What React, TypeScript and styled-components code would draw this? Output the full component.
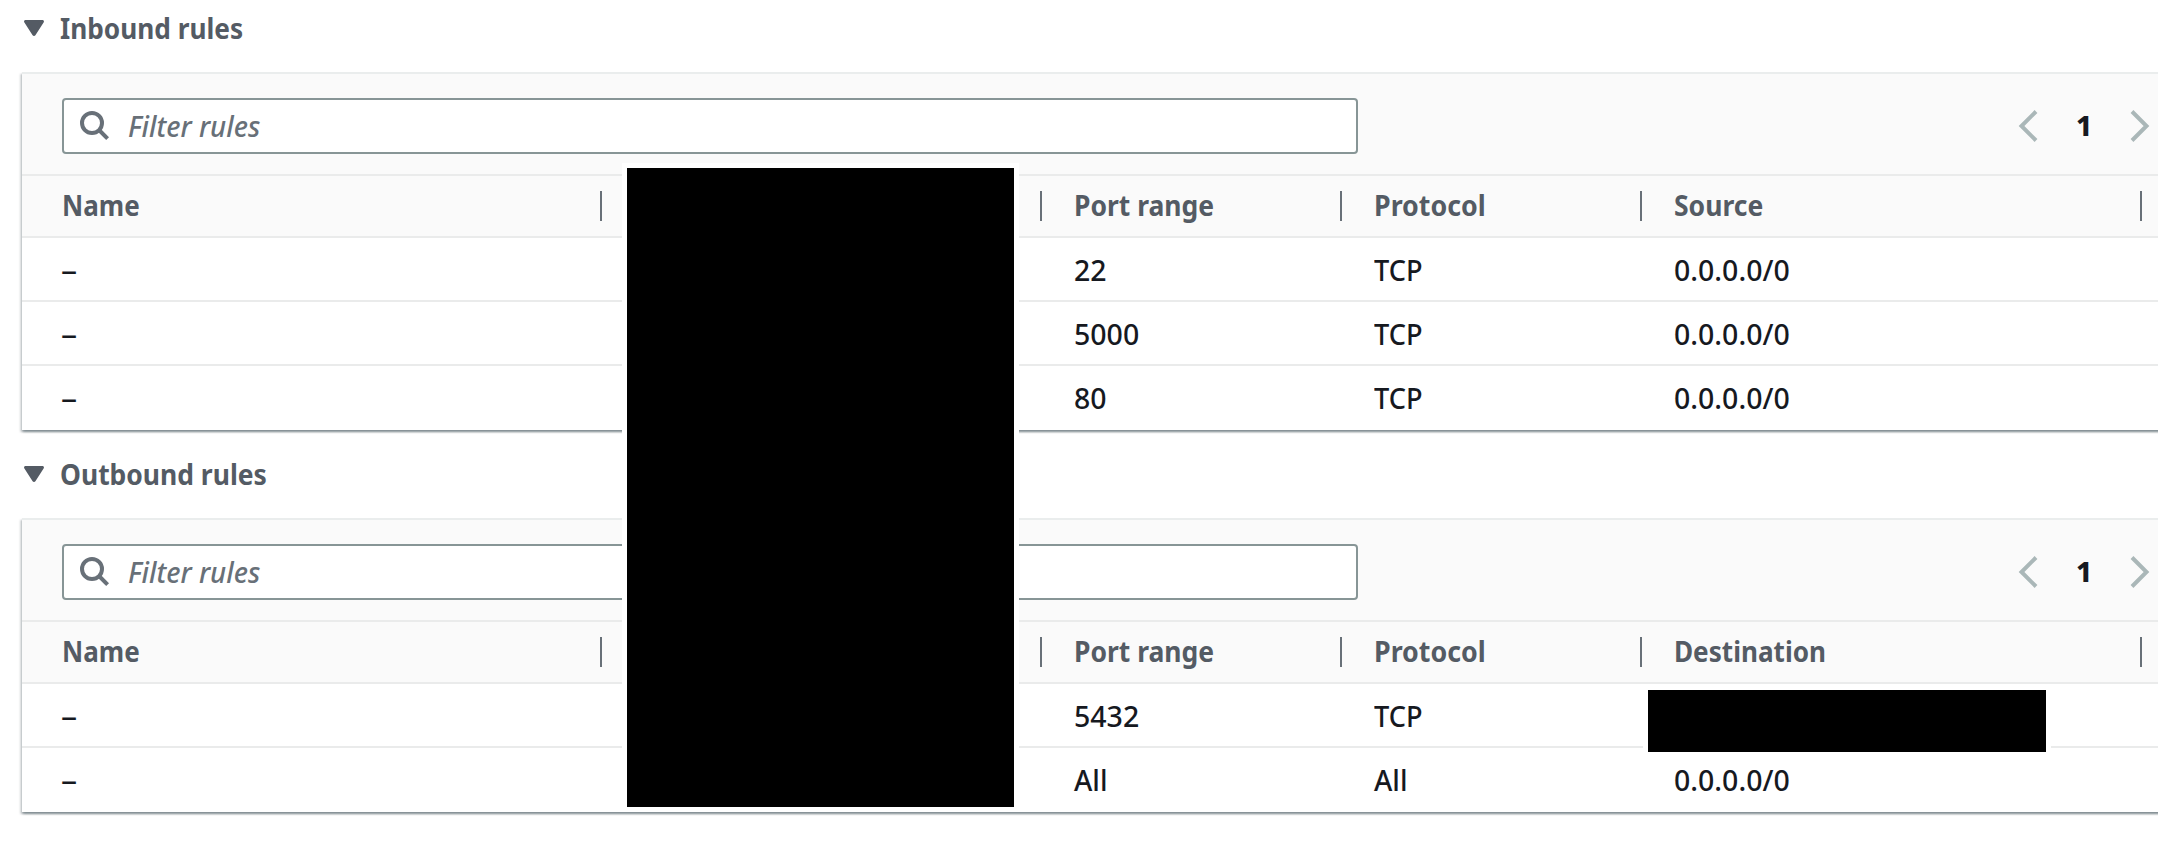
import React from 'react';
import styled, { createGlobalStyle } from 'styled-components';

const GlobalStyle = createGlobalStyle`
  *, *::before, *::after { box-sizing: border-box; }
  body {
    margin: 0;
    background: #fff;
    color: #16191f;
    font-family: "Noto Sans", "Open Sans", sans-serif;
    font-size: 28px;
    overflow: hidden;
  }
`;

const Page = styled.main`
  position: relative;
  width: 2158px;
  height: 856px;
  overflow: hidden;
`;

const Section = styled.section`
  margin-bottom: 16px;
`;

const SectionHeader = styled.div`
  display: flex;
  align-items: flex-start;
  height: 72px;
  padding: 8px 0 0 24px;
  color: #545b64;
`;

const Caret = styled.svg`
  width: 20px;
  height: 16px;
  margin: 12px 16px 0 0;
  fill: currentColor;
`;

const Title = styled.h3`
  margin: 0;
  font-size: 28px;
  font-weight: 700;
  line-height: 40px;
`;

const Fit = styled.span<{ $x: number }>`
  display: inline-block;
  white-space: nowrap;
  transform: scaleX(${p => p.$x});
  transform-origin: 0 50%;
`;

const Panel = styled.div`
  margin-left: 22px;
  width: 2200px;
  border-top: 2px solid #eaeded;
  background: #fff;
  box-shadow:
    0 2px 2px 0 rgba(0, 28, 36, 0.3),
    2px 2px 2px 0 rgba(0, 28, 36, 0.15),
    -2px 2px 2px 0 rgba(0, 28, 36, 0.15);
`;

const Toolbar = styled.div`
  display: flex;
  align-items: flex-start;
  height: 102px;
  padding: 24px 0 0 40px;
  background: #fafafa;
  border-bottom: 2px solid #eaebeb;
`;

const Search = styled.div`
  display: flex;
  flex: none;
  align-items: center;
  width: 1296px;
  height: 56px;
  padding-left: 16px;
  background: #fff;
  border: 2px solid #879596;
  border-radius: 4px;
  color: #687078;
`;

const SearchIcon = styled.svg`
  width: 30px;
  height: 30px;
  margin-right: 18px;
  fill: none;
  stroke: currentColor;
  stroke-width: 4;
`;

const Placeholder = styled.span`
  padding-top: 1px;
  font-style: italic;
  font-weight: 500;
  line-height: 41px;
`;

const Pagination = styled.div`
  display: flex;
  align-items: center;
  height: 56px;
  margin-left: 660px;
`;

const Chevron = styled.svg`
  width: 20px;
  height: 34px;
  flex: none;
  fill: none;
  stroke: #aab7b8;
  stroke-width: 4;
`;

const PageNumber = styled.span`
  width: 92px;
  padding-bottom: 2px;
  text-align: center;
  font-weight: 800;
  line-height: 40px;
`;

const Row = styled.div<{ $header?: boolean; $last?: boolean }>`
  display: grid;
  grid-template-columns: 580px 440px 300px 300px 500px;
  height: ${p => (p.$header ? 62 : 64)}px;
  background: ${p => (p.$header ? '#fafafa' : '#fff')};
  border-bottom: ${p => (p.$last ? 'none' : '2px solid #eaebeb')};
`;

const HeaderCell = styled.div<{ $first?: boolean }>`
  display: flex;
  align-items: center;
  height: 30px;
  margin-top: 15px;
  padding: 0 0 1px ${p => (p.$first ? 40 : 32)}px;
  border-right: 2px solid #687078;
  color: #545b64;
  font-weight: 700;
  line-height: 29px;
`;

const Cell = styled.div<{ $first?: boolean }>`
  height: 62px;
  padding-top: 1px;
  padding-left: ${p => (p.$first ? 39 : 32)}px;
  font-weight: 500;
  line-height: 62px;
`;

const Redaction = styled.div<{ $x: number; $y: number; $w: number; $h: number }>`
  position: absolute;
  left: ${p => p.$x}px;
  top: ${p => p.$y}px;
  width: ${p => p.$w}px;
  height: ${p => p.$h}px;
  background: #000;
  border: 5px solid #fff;
`;

const fits: Record<string, number> = {
  'Filter rules': 0.985,
  'Inbound rules': 0.937,
  'Outbound rules': 0.945,
  Name: 0.93,
  'Port range': 0.945,
  Protocol: 0.957,
  Source: 0.947,
  Destination: 0.933,
  '–': 1.15,
  All: 1,
  TCP: 0.97,
  '22': 1.015,
  '80': 1.015,
  '5000': 1.018,
  '5432': 1.018,
  '0.0.0.0/0': 1.018,
};

const Label = ({ children }: { children: string }) => (
  <Fit $x={fits[children] ?? 1}>{children}</Fit>
);

type RuleSectionProps = { title: string; target: string; rows: string[][] };

const RuleSection = ({ title, target, rows }: RuleSectionProps) => (
  <Section>
    <SectionHeader>
      <Caret viewBox="0 0 20 16">
        <path d="M1.6 0H18.4C19.8 0 20.4 1.4 19.6 2.5L11.4 15.2C10.8 16.2 9.2 16.2 8.6 15.2L.4 2.5C-.4 1.4.2 0 1.6 0Z" />
      </Caret>
      <Title><Label>{title}</Label></Title>
    </SectionHeader>
    <Panel>
      <Toolbar>
        <Search>
          <SearchIcon viewBox="0 0 30 30">
            <circle cx="12" cy="12" r="10" />
            <path d="M19 19L27.6 27.6" />
          </SearchIcon>
          <Placeholder><Label>Filter rules</Label></Placeholder>
        </Search>
        <Pagination>
          <Chevron viewBox="0 0 20 34"><path d="M18 2.5L3.5 17L18 31.5" /></Chevron>
          <PageNumber>1</PageNumber>
          <Chevron viewBox="0 0 20 34"><path d="M2 2.5L16.5 17L2 31.5" /></Chevron>
        </Pagination>
      </Toolbar>
      <Row $header>
        {['Name', '', 'Port range', 'Protocol', target].map((name, i) => (
          <HeaderCell key={i} $first={i === 0}><Label>{name}</Label></HeaderCell>
        ))}
      </Row>
      {rows.map((row, r) => (
        <Row key={r} $last={r === rows.length - 1}>
          {row.map((value, i) => (
            <Cell key={i} $first={i === 0}><Label>{value}</Label></Cell>
          ))}
        </Row>
      ))}
    </Panel>
  </Section>
);

export default function App() {
  return (
    <Page>
      <GlobalStyle />
      <RuleSection
        title="Inbound rules"
        target="Source"
        rows={[
          ['–', '', '22', 'TCP', '0.0.0.0/0'],
          ['–', '', '5000', 'TCP', '0.0.0.0/0'],
          ['–', '', '80', 'TCP', '0.0.0.0/0'],
        ]}
      />
      <RuleSection
        title="Outbound rules"
        target="Destination"
        rows={[
          ['–', '', '5432', 'TCP', ''],
          ['–', '', 'All', 'All', '0.0.0.0/0'],
        ]}
      />
      <Redaction $x={622} $y={163} $w={397} $h={649} />
      <Redaction $x={1643} $y={685} $w={408} $h={72} />
    </Page>
  );
}
